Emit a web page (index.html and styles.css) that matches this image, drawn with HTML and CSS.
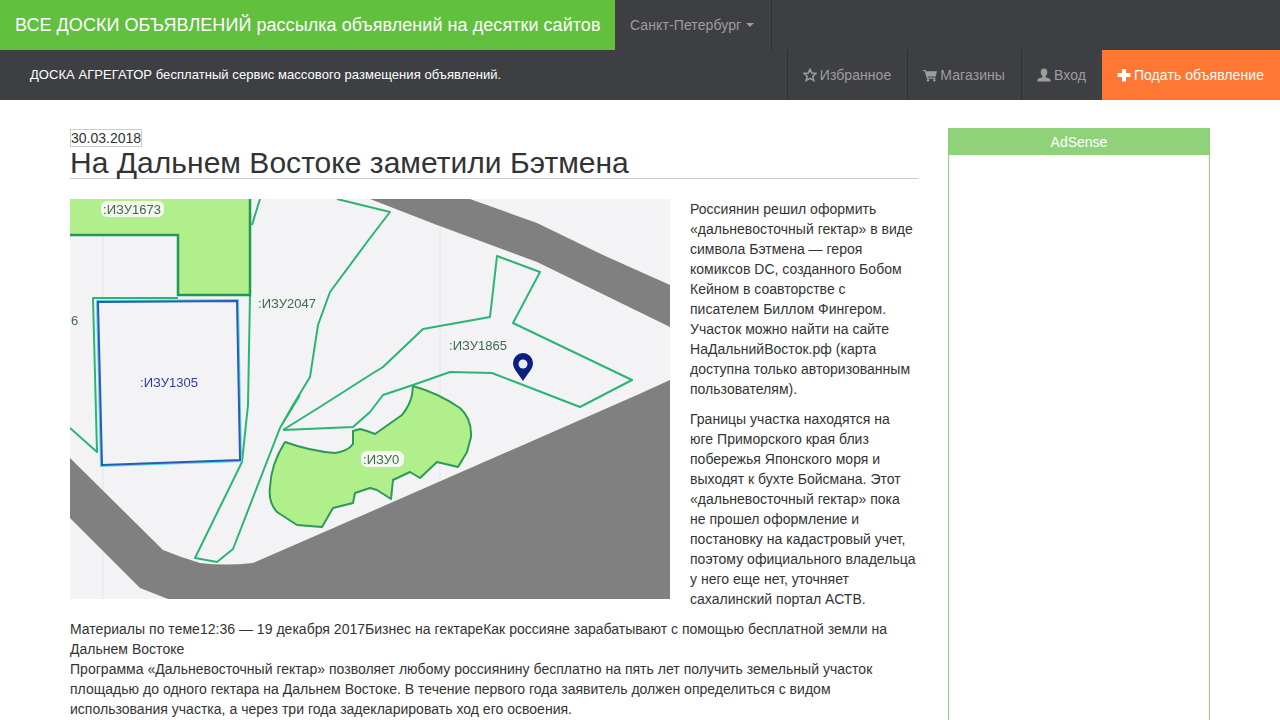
FILE: index.html
```html
<!DOCTYPE html>
<html lang="ru">
<head>
<meta charset="utf-8">
<title>На Дальнем Востоке заметили Бэтмена</title>
<link rel="stylesheet" href="styles.css">
</head>
<body>
<header class="header">
  <div class="top-row">
    <a class="brand">ВСЕ ДОСКИ ОБЪЯВЛЕНИЙ рассылка объявлений на десятки сайтов</a>
    <a class="city">Санкт-Петербург <span class="caret"></span></a>
  </div>
  <div class="sub-row">
    <div class="slogan">ДОСКА АГРЕГАТОР бесплатный сервис массового размещения объявлений.</div>
    <nav class="nav">
      <a class="nav-item"><svg class="icon" viewBox="0 0 14 14"><path d="M7 1.200l1.700 3.900 4.300.4-3.200 2.800 1 4.200L7 10.300l-3.800 2.200 1-4.200L1 5.500l4.300-.4z" fill="none" stroke="currentColor" stroke-width="1.500" stroke-linejoin="miter"/></svg> Избранное</a>
      <a class="nav-item"><svg class="icon" viewBox="0 0 14 14"><path d="M0 2h2.600l.5 1.300H14l-1.300 5.200H4.600l.3 1H12.600v1.200H3.800L1.800 3.200H0z" fill="currentColor"/><circle cx="5" cy="12.300" r="1.200" fill="currentColor"/><circle cx="11.300" cy="12.300" r="1.200" fill="currentColor"/></svg> Магазины</a>
      <a class="nav-item"><svg class="icon" viewBox="0 0 14 14"><path d="M7 .5c2.100 0 3.300 1.500 3.300 3.500 0 1.700-.8 3.200-1.700 4v1.300c1.800.6 4.900 1.300 4.900 2.900v1.300H.5v-1.300c0-1.600 3.100-2.300 4.900-2.900V8c-.9-.8-1.700-2.300-1.700-4C3.700 2 4.900.5 7 .5z" fill="currentColor"/></svg> Вход</a>
      <a class="nav-item nav-add"><svg class="icon" viewBox="0 0 14 14"><path d="M5 1h4v4h4.500v4H9v4.500H5V9H.5V5H5z" fill="currentColor"/></svg> Подать объявление</a>
    </nav>
  </div>
</header>
<div class="page">
  <main class="article">
    <div class="date-line"><span class="date">30.03.2018</span></div>
    <h1 class="title">На Дальнем Востоке заметили Бэтмена</h1>
    <div class="body-text">
      <svg class="map" viewBox="0 0 600 400" width="600" height="400">
        <rect class="map-bg" width="600" height="400"/>
        <path class="map-seam" d="M33 0V400M370 0V400"/>
        <path class="road" d="M300 0H400L467 24 533 56 600 86V128L467 63 367 26Z"/>
        <path class="road" d="M0 259L93 351Q110 358 130 364Q155 367 183 364L300 313 567 196 600 181V400H98L70 389 0 319Z"/>
        <path class="plot-fill" d="M0 0H180V96H108V36H0Z"/>
        <path class="plot-fill bat" d="M215 243Q240 252 265 254Q278 252 283 245L283 232 290 230 297 232 305 235 332 216Q340 206 342 196L343 187Q368 194 390 209Q402 220 401 238L397 253 388 268 367 263 350 279 340 273 323 281 321 300 307 291 300 289 285 294 283 304 263 309 252 328 227 326 207 313Q198 303 200 288Q201 265 215 243Z"/>
        <path class="line" d="M190 0L182 26M180 96L178 206 172 263 125 359 147 363 163 350 210 229 230 196M210 229L223 206 240 178 248 126 260 93 300 39 320 13 267 0M213 231L253 206 300 176 313 168 353 130 420 118 427 57 470 73 443 124 562 181 510 208 422 174 380 173 343 186 313 196 300 213 283 228 213 231M0 229L27 253 23 99H108"/>
        <path class="line-dark" d="M0 36H108V96H180V0"/>
        <path class="blue-halo" d="M28 103L167 102 170 261 32 266Z"/>
        <path class="blue" d="M28 103L167 102 170 261 32 266Z"/>
        <rect class="halo" x="31" y="2" width="63" height="16" rx="6"/>
        <rect class="halo" x="291" y="252" width="43" height="16" rx="6"/>
        <text class="lbl lbl-green" x="33" y="15">:ИЗУ1673</text>
        <text class="lbl lbl-green" x="188" y="109">:ИЗУ2047</text>
        <text class="lbl lbl-green" x="1" y="126">6</text>
        <text class="lbl lbl-blue" x="70" y="188">:ИЗУ1305</text>
        <text class="lbl lbl-green" x="379" y="151">:ИЗУ1865</text>
        <text class="lbl lbl-green" x="293" y="265">:ИЗУ0</text>
        <path class="pin" d="M453 182C448 174 443 170 443 164A10 10 0 0 1 463 164C463 170 458 174 453 182Z"/>
        <circle class="pin-hole" cx="453" cy="165" r="4.500"/>
      </svg>
      <p>Россиянин решил оформить «дальневосточный гектар» в виде символа Бэтмена — героя комиксов DC, созданного Бобом Кейном в соавторстве с писателем Биллом Фингером. Участок можно найти на сайте НаДальнийВосток.рф (карта доступна только авторизованным пользователям).</p>
      <p>Границы участка находятся на<br>юге Приморского края близ побережья Японского моря и выходят к бухте Бойсмана. Этот «дальневосточный гектар» пока не прошел оформление и постановку на кадастровый учет, поэтому официального владельца у него еще нет, уточняет сахалинский портал АСТВ.</p>
      <p>Материалы по теме12:36 — 19 декабря 2017Бизнес на гектареКак россияне зарабатывают с помощью бесплатной земли на Дальнем Востоке<br>Программа «Дальневосточный гектар» позволяет любому россиянину бесплатно на пять лет получить земельный участок площадью до одного гектара на Дальнем Востоке. В течение первого года заявитель должен определиться с видом использования участка, а через три года задекларировать ход его освоения.</p>
    </div>
  </main>
  <aside class="side">
    <div class="side-head">AdSense</div>
    <div class="side-body"></div>
  </aside>
</div>
</body>
</html>
```
FILE: styles.css
```css
* { box-sizing: border-box; }
html, body { margin: 0; padding: 0; }
body {
  font-family: "Liberation Sans", Arial, sans-serif;
  font-size: 14px;
  line-height: 20px;
  color: #333;
  background: #fff;
}
.header { background: #3e3f42; }
.top-row { display: flex; height: 50px; }
.brand {
  display: flex;
  align-items: center;
  width: 615px;
  padding-left: 15px;
  background: #62c03f;
  color: #fff;
  font-size: 18px;
  letter-spacing: 0.05px;
}
.city {
  display: flex;
  align-items: center;
  gap: 5px;
  width: 157px;
  padding-left: 15px;
  border-right: 1px solid #2f3032;
  color: #9d9d9d;
  letter-spacing: 0.1px;
}
.caret {
  width: 0;
  height: 0;
  border-top: 4px solid #9d9d9d;
  border-left: 4px solid transparent;
  border-right: 4px solid transparent;
}
.sub-row { display: flex; justify-content: space-between; height: 50px; }
.slogan {
  display: flex;
  align-items: center;
  padding-left: 30px;
  color: #fff;
  font-size: 13px;
  letter-spacing: 0.06px;
}
.nav { display: flex; }
.nav-item {
  display: flex;
  align-items: center;
  gap: 3px;
  padding: 0 16px 0 15px;
  border-left: 1px solid #2f3032;
  color: #9d9d9d;
  white-space: nowrap;
  letter-spacing: 0.07px;
}
.nav-add { background: #ff7733; color: #fff; border-left: 0; }
.icon { width: 14px; height: 14px; flex: none; }
.page {
  display: flex;
  gap: 30px;
  padding: 28px 70px 0;
  align-items: flex-start;
}
.article { width: 848px; flex: none; }
.date-line { height: 19px; }
.date {
  display: inline-block;
  border: 1px solid #ccc;
  line-height: 16px;
  color: #333;
}
.title {
  margin: 0 0 20px;
  border-bottom: 1px solid #ccc;
  font-size: 30px;
  line-height: 31px;
  font-weight: 400;
  letter-spacing: 0.03px;
}
.map { float: left; margin-right: 20px; display: block; filter: blur(0.4px); }
.body-text { letter-spacing: 0.02px; }
.body-text p { margin: 0 0 10px; }
.map-bg { fill: #f3f3f5; }
.map-seam { stroke: #e6e6e8; stroke-width: 1; fill: none; }
.road { fill: #808080; }
.plot-fill { fill: #b0ef8b; }
.bat { stroke: #2c9a58; stroke-width: 2; stroke-linejoin: round; }
.line { fill: none; stroke: #2bb573; stroke-width: 2; stroke-linejoin: round; }
.line-dark { fill: none; stroke: #1f9a55; stroke-width: 2.500; }
.blue-halo { fill: none; stroke: #5ad6dc; stroke-width: 4; }
.blue { fill: #f3f3f5; stroke: #2a5bb5; stroke-width: 2; }
.halo { fill: #f3f7ee; }
.lbl { font-size: 13px; font-family: "Liberation Sans", Arial, sans-serif; }
.lbl-green { fill: #3c6b4c; }
.lbl-blue { fill: #2a3f96; }
.pin { fill: #0b1f80; }
.pin-hole { fill: #e8eaf2; }
.side { width: 262px; flex: none; }
.side-head {
  height: 27px;
  background: #90d27a;
  color: #fff;
  text-align: center;
  line-height: 28px;
}
.side-body {
  height: 900px;
  border: 1px solid #90d27a;
  border-top: 0;
}
```
